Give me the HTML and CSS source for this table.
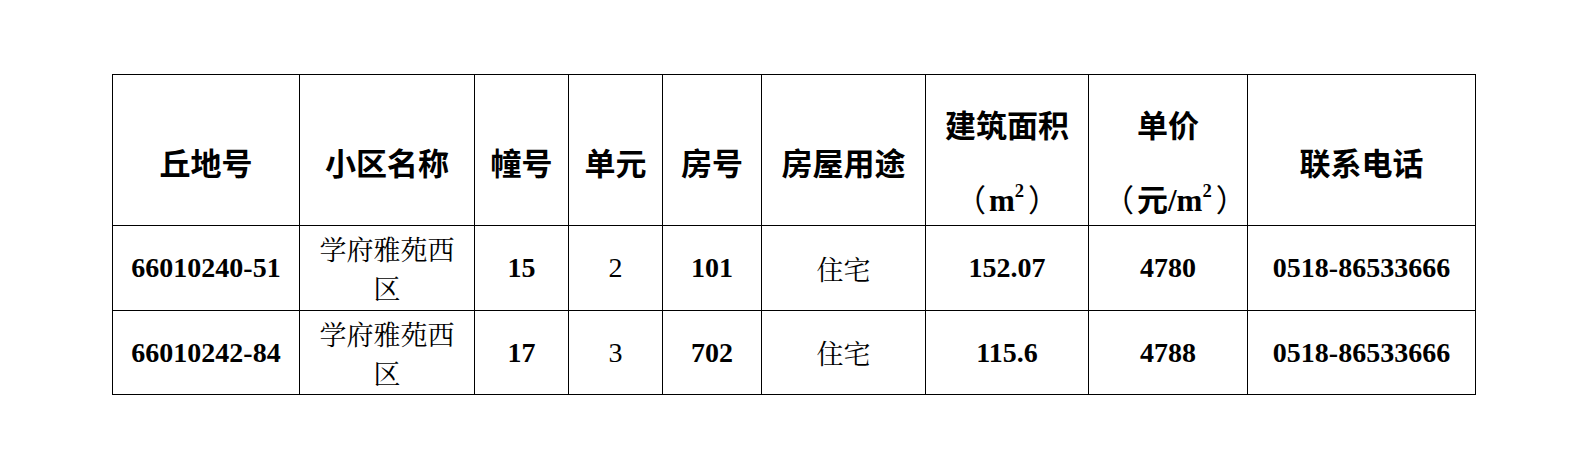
FILE: index.html
```html
<!DOCTYPE html>
<html lang="zh-CN">
<head>
<meta charset="utf-8">
<title>房源表</title>
<link rel="stylesheet" href="styles.css">
</head>
<body>
<table class="grid">
  <colgroup>
    <col class="c1"><col class="c2"><col class="c3"><col class="c4"><col class="c5"><col class="c6"><col class="c7"><col class="c8"><col class="c9">
  </colgroup>
  <tr class="head">
    <th>丘地号</th>
    <th>小区名称</th>
    <th>幢号</th>
    <th>单元</th>
    <th>房号</th>
    <th>房屋用途</th>
    <th><div class="l1">建筑面积</div><div class="l2"><span class="pl">（</span><span class="lat">m<sup>2</sup></span><span class="pr">）</span></div></th>
    <th><div class="l1">单价</div><div class="l2"><span class="pl">（</span>元<span class="lat">/m<sup>2</sup></span><span class="pr">）</span></div></th>
    <th>联系电话</th>
  </tr>
  <tr class="r1">
    <td class="num b">66010240-51</td>
    <td class="zh">学府雅苑西区</td>
    <td class="num b">15</td>
    <td class="num">2</td>
    <td class="num b">101</td>
    <td class="zh">住宅</td>
    <td class="num b">152.07</td>
    <td class="num b">4780</td>
    <td class="num b">0518-86533666</td>
  </tr>
  <tr class="r2">
    <td class="num b">66010242-84</td>
    <td class="zh">学府雅苑西区</td>
    <td class="num b">17</td>
    <td class="num">3</td>
    <td class="num b">702</td>
    <td class="zh">住宅</td>
    <td class="num b">115.6</td>
    <td class="num b">4788</td>
    <td class="num b">0518-86533666</td>
  </tr>
</table>
</body>
</html>
```
FILE: styles.css
```css
html, body {
  margin: 0;
  padding: 0;
  background: #fff;
}
body {
  padding: 74px 0 0 112px;
  color: #000;
}
.grid {
  border-collapse: collapse;
  table-layout: fixed;
  width: 1364px;
}
.c1 { width: 187px; }
.c2 { width: 175px; }
.c3 { width: 94px; }
.c4 { width: 94px; }
.c5 { width: 99px; }
.c6 { width: 164px; }
.c7 { width: 163px; }
.c8 { width: 159px; }
.c9 { width: 228px; }
.grid th, .grid td {
  border: 1px solid #000;
  text-align: center;
  vertical-align: middle;
  padding: 0 14px;
}
.head { height: 151px; }
.r1 { height: 85px; }
.r2 { height: 84px; }
.grid th {
  font-family: "Noto Sans CJK SC", sans-serif;
  font-weight: 700;
  font-size: 31px;
  line-height: 37px;
  padding-top: 23px;
  padding-bottom: 0;
  white-space: nowrap;
}
.l2 {
  margin-top: 37px;
}
.pl {
  font-weight: 400;
  margin-right: 3px;
}
.pr {
  font-weight: 400;
  margin-left: 4px;
}
.lat {
  font-family: "Liberation Serif", serif;
  font-weight: 700;
}
.lat sup {
  font-size: 0.6em;
  line-height: 0;
  vertical-align: 0.75em;
}
.num {
  font-family: "Liberation Serif", serif;
  font-size: 28px;
  font-weight: 400;
}
.num.b {
  font-weight: 700;
}
.zh {
  font-family: "Noto Serif CJK SC", "Noto Sans CJK SC", serif;
  font-size: 27px;
  font-weight: 400;
  line-height: 39px;
}
```
